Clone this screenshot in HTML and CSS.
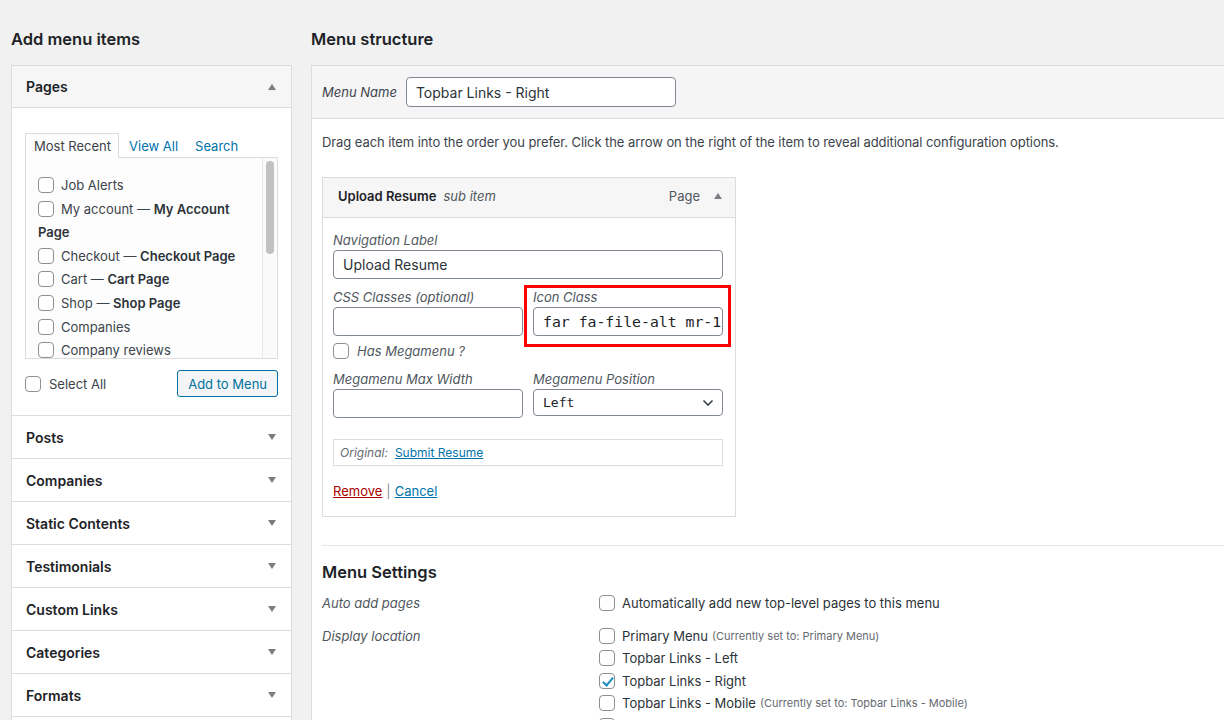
FILE: index.html
```html
<!DOCTYPE html>
<html lang="en">
<head>
<meta charset="utf-8">
<title>Menus</title>
<link rel="stylesheet" href="styles.css">
</head>
<body>
<div class="wrap">
  <div class="side">
    <h2 class="col-title">Add menu items</h2>
    <div class="accordion">
      <div class="acc open">
        <h3 class="acc-head">Pages <span class="tri up"></span></h3>
        <div class="acc-body">
          <ul class="tabs">
            <li class="tab active">Most Recent</li>
            <li class="tab"><a href="#">View All</a></li>
            <li class="tab tab-last"><a href="#">Search</a></li>
          </ul>
          <div class="tab-panel">
            <ul class="checklist">
              <li><label><input type="checkbox">Job Alerts</label></li>
              <li><label><input type="checkbox">My account — <b>My Account Page</b></label></li>
              <li><label><input type="checkbox">Checkout — <b>Checkout Page</b></label></li>
              <li><label><input type="checkbox">Cart — <b>Cart Page</b></label></li>
              <li><label><input type="checkbox">Shop — <b>Shop Page</b></label></li>
              <li><label><input type="checkbox">Companies</label></li>
              <li><label><input type="checkbox">Company reviews</label></li>
            </ul>
            <div class="scroll"><div class="thumb"></div></div>
          </div>
          <div class="add-row">
            <label class="select-all"><input type="checkbox">Select All</label>
            <button class="btn">Add to Menu</button>
          </div>
        </div>
      </div>
      <div class="acc"><h3 class="acc-head">Posts <span class="tri down"></span></h3></div>
      <div class="acc"><h3 class="acc-head">Companies <span class="tri down"></span></h3></div>
      <div class="acc"><h3 class="acc-head">Static Contents <span class="tri down"></span></h3></div>
      <div class="acc"><h3 class="acc-head">Testimonials <span class="tri down"></span></h3></div>
      <div class="acc"><h3 class="acc-head">Custom Links <span class="tri down"></span></h3></div>
      <div class="acc"><h3 class="acc-head">Categories <span class="tri down"></span></h3></div>
      <div class="acc"><h3 class="acc-head">Formats <span class="tri down"></span></h3></div>
      <div class="acc"><h3 class="acc-head">Tags <span class="tri down"></span></h3></div>
    </div>
  </div>

  <div class="main">
    <h2 class="col-title">Menu structure</h2>
    <div class="menu-panel">
      <div class="menu-header">
        <label class="menu-name-label" for="menu-name">Menu Name</label>
        <input id="menu-name" class="input menu-name" type="text" value="Topbar Links - Right">
      </div>
      <div class="menu-body">
        <p class="hint">Drag each item into the order you prefer. Click the arrow on the right of the item to reveal additional configuration options.</p>

        <div class="item">
          <div class="item-head">
            <span class="item-title"><b>Upload Resume</b><i>sub item</i></span>
            <span class="item-type">Page <span class="tri up"></span></span>
          </div>
          <div class="item-settings">
            <label class="field">Navigation Label<input class="input" type="text" value="Upload Resume"></label>
            <div class="row2">
              <label class="field">CSS Classes (optional)<input class="input" type="text" value=""></label>
              <div class="field-wrap">
                <label class="field">Icon Class<input class="input mono" type="text" value="far fa-file-alt mr-1"></label>
                <span class="highlight"></span>
              </div>
            </div>
            <label class="mega"><input type="checkbox">Has Megamenu ?</label>
            <div class="row2 row-mega">
              <label class="field">Megamenu Max Width<input class="input" type="text" value=""></label>
              <label class="field">Megamenu Position
                <span class="select"><span class="sel-val">Left</span>
                  <svg class="chev" width="12" height="8" viewBox="0 0 12 8"><path d="M1.5 1.5 6 6l4.5-4.5" fill="none" stroke="#3c434a" stroke-width="1.6"/></svg>
                </span>
              </label>
            </div>
            <div class="original"><i>Original:</i><a href="#">Submit Resume</a></div>
            <div class="actions"><a class="remove" href="#">Remove</a><span class="sep">|</span><a href="#">Cancel</a></div>
          </div>
        </div>

        <div class="settings">
          <h3 class="settings-title">Menu Settings</h3>
          <div class="set-row">
            <div class="set-label">Auto add pages</div>
            <div class="set-opts">
              <label class="opt"><input type="checkbox">Automatically add new top-level pages to this menu</label>
            </div>
          </div>
          <div class="set-row">
            <div class="set-label">Display location</div>
            <div class="set-opts">
              <label class="opt"><input type="checkbox">Primary Menu <small>(Currently set to: Primary Menu)</small></label>
              <label class="opt"><input type="checkbox">Topbar Links - Left</label>
              <label class="opt"><input type="checkbox" checked>Topbar Links - Right</label>
              <label class="opt"><input type="checkbox">Topbar Links - Mobile <small>(Currently set to: Topbar Links - Mobile)</small></label>
              <label class="opt"><input type="checkbox">Footer Menu</label>
            </div>
          </div>
        </div>
      </div>
    </div>
  </div>
</div>
</body>
</html>
```

FILE: styles.css
```css
* { box-sizing: border-box; }

html, body {
  margin: 0;
  height: 720px;
  overflow: hidden;
}

body {
  background: #f1f1f1;
  font-family: "Inter", "Liberation Sans", sans-serif;
  font-size: 13px;
  color: #3c434a;
}

a { color: #0073aa; }

.wrap {
  display: flex;
  gap: 19px;
  padding-left: 11px;
  width: 1400px;
}

.col-title {
  margin: 0;
  padding-top: 28px;
  height: 65px;
  line-height: 22px;
  font-size: 16.5px;
  font-weight: 600;
  color: #1d2327;
}

/* ---------- left column ---------- */
.side { width: 281px; flex: none; }

.accordion {
  background: #fff;
  border: 1px solid #dcdcde;
}

.acc { border-bottom: 1px solid #dcdcde; }
.acc:last-child { border-bottom: 0; }

.acc-head {
  margin: 0;
  height: 42px;
  padding: 0 15px 0 14px;
  display: flex;
  align-items: center;
  justify-content: space-between;
  font-size: 14px;
  font-weight: 600;
  color: #1d2327;
  background: #fff;
}
.acc.open .acc-head {
  background: #f6f6f6;
  border-bottom: 1px solid #dcdcde;
}

.tri {
  display: inline-block;
  width: 0;
  height: 0;
  border-left: 4.5px solid transparent;
  border-right: 4.5px solid transparent;
}
.tri.down { border-top: 6px solid #7a7e83; }
.tri.up { border-bottom: 6px solid #7a7e83; }

.acc-body { padding: 25px 13px 18px; }

.tabs {
  list-style: none;
  margin: 0;
  padding: 0;
  display: flex;
  height: 24px;
  position: relative;
  z-index: 1;
}
.tab {
  padding: 0 9px;
  line-height: 24px;
  border: 1px solid transparent;
  border-bottom: 0;
}
.tab a { text-decoration: none; color: #0073aa; }
.tab.active {
  border-color: #dcdcde;
  background: #fdfdfd;
  color: #3c434a;
  height: 25px;
  padding: 0 7px 0 8px;
}
.tab.tab-last { padding-left: 6px; }

.tab-panel {
  display: flex;
  height: 202px;
  border: 1px solid #dcdcde;
  background: #fdfdfd;
  overflow: hidden;
}

.checklist {
  list-style: none;
  margin: 0;
  padding: 16px 6px 0 12px;
  flex: 1;
  line-height: 23.6px;
}
.checklist b { font-weight: 600; color: #2c3338; }

input[type="checkbox"] {
  -webkit-appearance: none;
  appearance: none;
  width: 16px;
  height: 16px;
  margin: 0 7px 0 0;
  border: 1px solid #8c8f94;
  border-radius: 4px;
  background: #fff;
  vertical-align: -3px;
  position: relative;
}
input[type="checkbox"]:checked::before {
  content: "";
  position: absolute;
  left: 4.5px;
  top: 1px;
  width: 4px;
  height: 9px;
  border-right: 2px solid #1e8cbe;
  border-bottom: 2px solid #1e8cbe;
  transform: rotate(40deg);
}

.scroll {
  width: 15px;
  flex: none;
  background: #fafafa;
  border-left: 1px solid #e8e8e8;
  padding: 3px 3px 0 3px;
}
.thumb {
  width: 8px;
  height: 93px;
  border-radius: 4px;
  background: #c1c1c1;
}

.add-row {
  display: flex;
  justify-content: space-between;
  align-items: center;
  margin-top: 11px;
}
.select-all { display: flex; align-items: center; padding-top: 1px; }
.select-all input { vertical-align: middle; margin-right: 8px; }

.btn {
  font: inherit;
  font-size: 13px;
  height: 27px;
  padding: 0 10px;
  border: 1px solid #0071a1;
  border-radius: 3px;
  background: #f3f5f6;
  color: #0071a1;
}

/* ---------- right column ---------- */
.main { width: 1000px; flex: none; }

.menu-panel {
  border: 1px solid #dcdcde;
  border-right: 0;
  background: #fff;
  min-height: 700px;
}

.menu-header {
  display: flex;
  align-items: center;
  gap: 9px;
  padding: 11px 10px;
  background: #f5f5f5;
  border-bottom: 1px solid #dcdcde;
}
.menu-name-label { font-style: italic; color: #3c434a; }
.input {
  font: inherit;
  font-size: 14px;
  color: #2c3338;
  height: 29px;
  border: 1px solid #7e8993;
  border-radius: 4px;
  padding: 0 9px;
  background: #fff;
  display: block;
  width: 100%;
}
.menu-name { width: 270px; height: 30px; }

.menu-body { padding: 13px 10px 0; }

.hint { margin: 0; line-height: 20px; letter-spacing: -0.08px; }

.item {
  width: 414px;
  margin-top: 25px;
  border: 1px solid #dcdcde;
}
.item-head {
  height: 40px;
  background: #f6f6f6;
  border-bottom: 1px solid #dcdcde;
  display: flex;
  align-items: center;
  justify-content: space-between;
  padding: 0 13px 3px 15px;
}
.item-title b { font-weight: 600; color: #1d2327; margin-right: 7px; }
.item-title i { color: #50575e; }
.item-type { color: #50575e; display: flex; align-items: center; gap: 14px; }

.item-settings { padding: 13px 12px 16px 10px; }

.field {
  display: block;
  font-style: italic;
  line-height: 18px;
  color: #50575e;
}
.field .input { margin-top: 1px; font-style: normal; }

.row2 {
  display: grid;
  grid-template-columns: 1fr 1fr;
  gap: 10px;
  margin-top: 9px;
}
.field-wrap { position: relative; }
.highlight {
  position: absolute;
  left: -9px;
  right: -8px;
  top: -3px;
  bottom: -11px;
  border: 3.5px solid #f00;
  pointer-events: none;
}

.field .mono {
  font-family: "DejaVu Sans Mono", "Liberation Mono", monospace;
  font-size: 14.8px;
  color: #1d2327;
  padding-right: 0;
}

.mega {
  display: flex;
  align-items: center;
  margin-top: 7px;
  font-style: italic;
  color: #50575e;
  height: 16px;
}
.mega input { margin-right: 8px; }

.row-mega { margin-top: 11px; }

.select {
  margin-top: 1px;
  height: 27px;
  border: 1px solid #7e8993;
  border-radius: 4px;
  display: flex;
  align-items: center;
  justify-content: space-between;
  padding: 0 8px 0 9px;
  font-style: normal;
}
.sel-val {
  font-family: "DejaVu Sans Mono", "Liberation Mono", monospace;
  font-size: 13px;
  color: #1d2327;
}

.original {
  margin-top: 21px;
  height: 27px;
  border: 1px solid #dcdcde;
  display: flex;
  align-items: center;
  padding: 0 6px;
  gap: 7px;
  font-size: 12px;
}
.original i { color: #646970; }

.actions { margin-top: 16px; line-height: 18px; }
.remove { color: #a00; }
.sep { color: #8c8f94; margin: 0 4px; }

.settings {
  margin-top: 28px;
  border-top: 1px solid #e5e5e5;
  padding-top: 15px;
}
.settings-title {
  margin: 0;
  font-size: 16.5px;
  font-weight: 600;
  line-height: 22px;
  color: #1d2327;
}
.set-row {
  display: flex;
  margin-top: 9px;
}
.set-row + .set-row { margin-top: 10px; }
.set-label {
  width: 277px;
  flex: none;
  font-style: italic;
  color: #50575e;
  line-height: 22px;
}
.set-opts { display: flex; flex-direction: column; }
.opt {
  display: flex;
  align-items: center;
  height: 22.5px;
  color: #2c3338;
}
.opt input { margin-right: 7px; }
.opt small { font-size: 11px; color: #646970; margin-left: 4px; }
```
